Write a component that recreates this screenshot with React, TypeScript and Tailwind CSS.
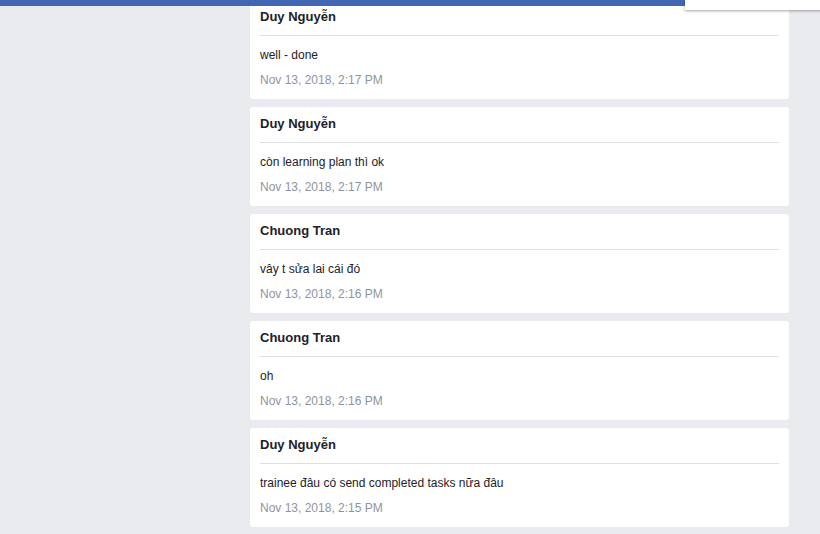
import React from "react";

const messages = [
  { name: "Duy Nguyễn", text: "well - done", date: "Nov 13, 2018, 2:17 PM" },
  { name: "Duy Nguyễn", text: "còn learning plan thì ok", date: "Nov 13, 2018, 2:17 PM" },
  { name: "Chuong Tran", text: "vây t sửa lai cái đó", date: "Nov 13, 2018, 2:16 PM" },
  { name: "Chuong Tran", text: "oh", date: "Nov 13, 2018, 2:16 PM" },
  { name: "Duy Nguyễn", text: "trainee đâu có send completed tasks nữa đâu", date: "Nov 13, 2018, 2:15 PM" },
];

export default function App() {
  return (
    <div
      className="relative h-[534px] w-[820px] overflow-hidden bg-[#e9ebee]"
      style={{ fontFamily: '"Liberation Sans", Arial, sans-serif' }}
    >
      <div className="ml-[250px] flex w-[539px] flex-col gap-[8px]">
        {messages.map((m, i) => (
          <div key={i} className="rounded-[3px] bg-white px-[10px] pt-[9px] pb-[11px]">
            <div className="h-[16px] text-[13px] leading-[16px] font-bold text-[#1d2129]">{m.name}</div>
            <div className="mt-[10px] h-px bg-[#dddfe2]" />
            <div className="mt-[11px] h-[16px] text-[12px] leading-[16px] text-[#1d2129]">{m.text}</div>
            <div className="mt-[9px] h-[16px] text-[12px] leading-[16px] text-[#90949c]">{m.date}</div>
          </div>
        ))}
      </div>
      <div className="absolute top-0 left-0 h-[6px] w-full bg-[#4267b2]" />
      <div className="absolute top-0 left-[685px] h-[10px] w-[160px] bg-white shadow-[0_1px_3px_rgba(0,0,0,0.35)]" />
    </div>
  );
}
